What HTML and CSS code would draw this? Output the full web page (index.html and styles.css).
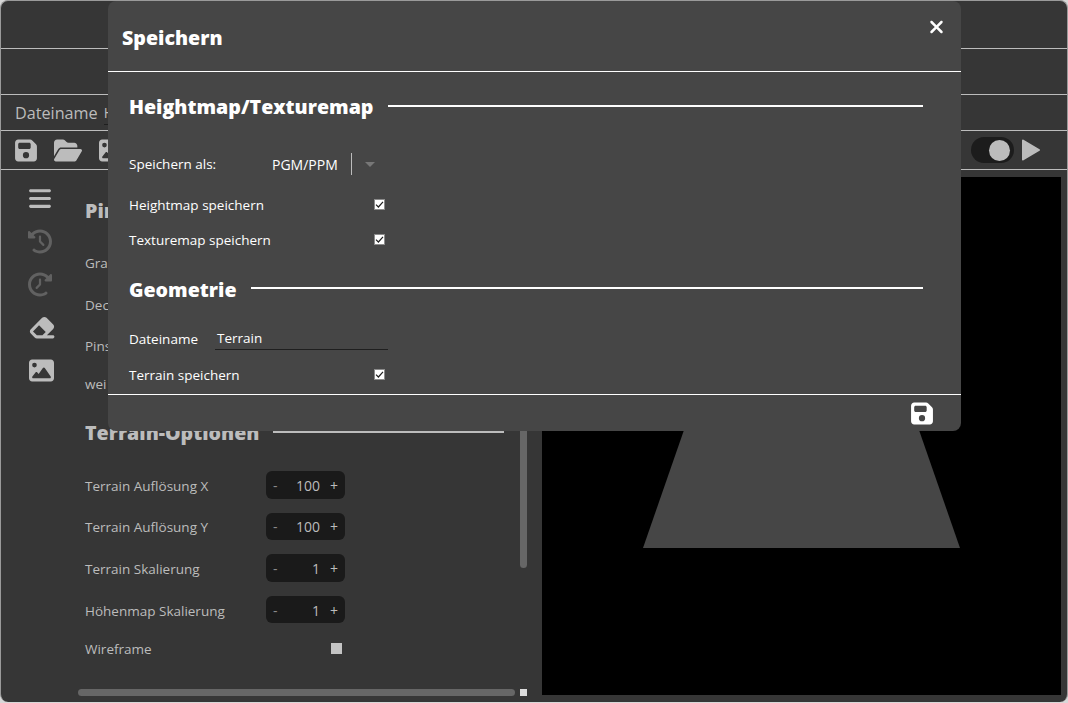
FILE: index.html
```html
<!DOCTYPE html>
<html lang="de">

<head>
    <meta charset="utf-8">
    <title>Terrain</title>
    <link rel="stylesheet" href="styles.css">
</head>

<body>
    <div class="app">
        <div class="bar bar-title"></div>
        <div class="bar bar-menu"></div>
        <div class="bar bar-file"><span>Dateiname</span><div class="file-input">H</div></div>
        <div class="bar bar-tools">
            <svg class="tool" width="22" height="25" viewBox="0 0 448 512"><path d="M64 32C28.7 32 0 60.7 0 96V416c0 35.3 28.7 64 64 64H384c35.3 0 64-28.7 64-64V173.3c0-17-6.7-33.3-18.7-45.3L352 50.7C340 38.7 323.7 32 306.7 32H64zm0 96c0-17.7 14.3-32 32-32H288c17.7 0 32 14.3 32 32v64c0 17.7-14.3 32-32 32H96c-17.7 0-32-14.3-32-32V128zM224 288a64 64 0 1 1 0 128 64 64 0 1 1 0-128z"/></svg>
            <svg class="tool" width="28" height="25" viewBox="0 0 576 512"><path d="M88.7 223.8L0 375.8V96C0 60.7 28.7 32 64 32H181.5c17 0 33.3 6.7 45.3 18.7l26.5 26.5c12 12 28.3 18.7 45.3 18.7H416c35.3 0 64 28.7 64 64v32H144c-22.8 0-43.8 12.1-55.3 31.8zm27.6 16.1C122.1 230 132.6 224 144 224H544c11.5 0 22 6.1 27.7 16.1s5.7 22.2-.1 32.1l-112 192C453.9 474 443.4 480 432 480H32c-11.5 0-22-6.1-27.7-16.1s-5.7-22.2 .1-32.1l112-192z"/></svg>
            <svg class="tool" width="25" height="25" viewBox="0 0 512 512"><path d="M0 96C0 60.7 28.7 32 64 32H448c35.3 0 64 28.7 64 64V416c0 35.3-28.7 64-64 64H64c-35.3 0-64-28.7-64-64V96zM323.8 202.5c-4.5-6.6-11.9-10.5-19.8-10.5s-15.4 3.9-19.8 10.5l-87 127.6L170.7 297c-4.6-5.7-11.5-9-18.7-9s-14.2 3.3-18.7 9l-64 80c-5.8 7.2-6.9 17.1-2.9 25.4s12.4 13.6 21.6 13.6h96 32H424c8.9 0 17.1-4.9 21.2-12.8s3.6-17.4-1.4-24.7l-120-176zM112 192a48 48 0 1 0 0-96 48 48 0 1 0 0 96z"/></svg>
            <div class="tools-right">
                <div class="toggle"><span class="knob"></span></div>
                <svg class="tool" width="20" height="24" viewBox="0 0 20 24"><path d="M2 2.500 18 12 2 21.500z" stroke="#bcbcbc" stroke-width="2" stroke-linejoin="round"/></svg>
            </div>
        </div>

        <div class="main">
            <div class="rail">
                <svg width="22" height="25" viewBox="0 0 448 512"><path d="M0 96C0 78.3 14.3 64 32 64H416c17.7 0 32 14.3 32 32s-14.3 32-32 32H32C14.3 128 0 113.7 0 96zM0 256c0-17.700 14.300-32 32-32H416c17.700 0 32 14.300 32 32s-14.300 32-32 32H32c-17.700 0-32-14.300-32-32zM448 416c0 17.700-14.300 32-32 32H32c-17.700 0-32-14.300-32-32s14.300-32 32-32H416c17.700 0 32 14.300 32 32z"/></svg>
                <svg class="off" width="24" height="25" viewBox="0 0 512 512"><path d="M75 75L41 41C25.900 25.900 0 36.600 0 57.900V168c0 13.300 10.700 24 24 24H134.100c21.400 0 32.100-25.900 17-41l-30.800-30.800C155 85.500 203 64 256 64c106 0 192 86 192 192s-86 192-192 192c-40.800 0-78.600-12.700-109.700-34.400c-14.500-10.100-34.400-6.600-44.600 7.900s-6.600 34.400 7.900 44.600C151.200 495 201.700 512 256 512c141.400 0 256-114.600 256-256S397.400 0 256 0C185.300 0 121.300 28.700 75 75zm181 53c-13.300 0-24 10.700-24 24V256c0 6.400 2.500 12.500 7 17l72 72c9.400 9.400 24.600 9.400 33.900 0s9.400-24.600 0-33.900l-65-65V152c0-13.300-10.700-24-24-24z"/></svg>
                <svg class="off mirror" width="24" height="25" viewBox="0 0 512 512"><path d="M75 75L41 41C25.900 25.900 0 36.600 0 57.900V168c0 13.300 10.700 24 24 24H134.100c21.400 0 32.100-25.900 17-41l-30.800-30.800C155 85.500 203 64 256 64c106 0 192 86 192 192s-86 192-192 192c-40.800 0-78.600-12.700-109.700-34.400c-14.500-10.100-34.400-6.600-44.600 7.900s-6.600 34.400 7.900 44.600C151.200 495 201.700 512 256 512c141.400 0 256-114.600 256-256S397.400 0 256 0C185.300 0 121.300 28.700 75 75zm181 53c-13.300 0-24 10.700-24 24V256c0 6.400 2.500 12.500 7 17l72 72c9.400 9.400 24.600 9.400 33.900 0s9.400-24.600 0-33.900l-65-65V152c0-13.300-10.700-24-24-24z"/></svg>
                <svg class="erase" width="28" height="25" viewBox="0 0 576 512"><path d="M290.700 57.400L57.400 290.700c-25 25-25 65.500 0 90.500l80 80c12 12 28.300 18.700 45.300 18.700H288h9.400H512c17.700 0 32-14.300 32-32s-14.300-32-32-32H387.900L518.600 285.300c25-25 25-65.500 0-90.500L381.300 57.400c-25-25-65.500-25-90.500 0zM297.400 416H288l-105.400 0-80-80L227.300 211.300 364.700 348.700 297.400 416z"/></svg>
                <svg class="picture" width="25" height="25" viewBox="0 0 512 512"><path d="M0 96C0 60.700 28.700 32 64 32H448c35.300 0 64 28.700 64 64V416c0 35.300-28.700 64-64 64H64c-35.300 0-64-28.700-64-64V96zM323.800 202.500c-4.500-6.600-11.900-10.500-19.800-10.500s-15.400 3.900-19.800 10.500l-87 127.600L170.700 297c-4.600-5.700-11.500-9-18.700-9s-14.200 3.300-18.700 9l-64 80c-5.800 7.200-6.900 17.100-2.900 25.400s12.400 13.600 21.600 13.600h96 32H424c8.900 0 17.100-4.900 21.200-12.800s3.600-17.400-1.400-24.700l-120-176zM112 192a48 48 0 1 0 0-96 48 48 0 1 0 0 96z"/></svg>
            </div>

            <div class="panel">
                <h3 class="panel-head first">Pin</h3>
                <div class="prow r-grafik">Gra</div>
                <div class="prow r-deck">Dec</div>
                <div class="prow r-pinsel">Pins</div>
                <div class="prow r-weich">wei</div>
                <h3 class="panel-head second">Terrain-Optionen<span class="rule"></span></h3>
                <div class="prow num"><span class="lbl">Terrain Auflösung X</span><div class="stepper"><span>-</span><b>100</b><span>+</span></div></div>
                <div class="prow num"><span class="lbl">Terrain Auflösung Y</span><div class="stepper"><span>-</span><b>100</b><span>+</span></div></div>
                <div class="prow num"><span class="lbl">Terrain Skalierung</span><div class="stepper"><span>-</span><b>1</b><span>+</span></div></div>
                <div class="prow num"><span class="lbl">Höhenmap Skalierung</span><div class="stepper"><span>-</span><b>1</b><span>+</span></div></div>
                <div class="prow num wire"><span class="lbl">Wireframe</span><i class="box"></i></div>
                <div class="vscroll"></div>
                <div class="hscroll"></div>
                <div class="corner"></div>
            </div>

            <div class="view">
                <svg width="519" height="518" viewBox="0 0 519 518"><polygon points="150,230 369,230 418,371 101,371" fill="#464646"/></svg>
            </div>
        </div>

        <div class="modal">
            <div class="modal-head">
                <h2>Speichern</h2>
                <svg class="close" width="15" height="20" viewBox="0 0 384 512"><path d="M342.600 150.600c12.500-12.500 12.500-32.800 0-45.300s-32.800-12.500-45.300 0L192 210.700 86.600 105.400c-12.500-12.500-32.800-12.500-45.300 0s-12.500 32.800 0 45.300L146.700 256 41.400 361.400c-12.500 12.500-12.500 32.800 0 45.300s32.800 12.500 45.300 0L192 301.300 297.400 406.600c12.500 12.500 32.800 12.500 45.300 0s12.500-32.800 0-45.300L237.300 256 342.600 150.600z"/></svg>
            </div>
            <div class="modal-body">
                <h3 class="sect">Heightmap/Texturemap<span class="rule"></span></h3>
                <div class="field select-row">
                    <span class="label">Speichern als:</span>
                    <div class="select"><span>PGM/PPM</span><i class="sep"></i><i class="caret"></i></div>
                </div>
                <div class="field check h1"><span>Heightmap speichern</span><i class="cb"><svg width="9" height="9" viewBox="0 0 9 9"><path d="M1 4.600 3.400 7 8 1.800"/></svg></i></div>
                <div class="field check h2"><span>Texturemap speichern</span><i class="cb"><svg width="9" height="9" viewBox="0 0 9 9"><path d="M1 4.600 3.400 7 8 1.800"/></svg></i></div>
                <h3 class="sect geo">Geometrie<span class="rule"></span></h3>
                <div class="field name-row"><span>Dateiname</span><div class="input">Terrain</div></div>
                <div class="field check h3"><span>Terrain speichern</span><i class="cb"><svg width="9" height="9" viewBox="0 0 9 9"><path d="M1 4.600 3.400 7 8 1.800"/></svg></i></div>
            </div>
            <div class="modal-foot">
                <svg width="22" height="25" viewBox="0 0 448 512"><path d="M64 32C28.700 32 0 60.700 0 96V416c0 35.300 28.700 64 64 64H384c35.300 0 64-28.700 64-64V173.300c0-17-6.700-33.300-18.700-45.300L352 50.700C340 38.700 323.700 32 306.700 32H64zm0 96c0-17.700 14.300-32 32-32H288c17.700 0 32 14.300 32 32v64c0 17.700-14.300 32-32 32H96c-17.700 0-32-14.300-32-32V128zM224 288a64 64 0 1 1 0 128 64 64 0 1 1 0-128z"/></svg>
            </div>
        </div>
    </div>
</body>

</html>
```

FILE: styles.css
```css
* {
    box-sizing: border-box;
    font-family: "Open Sans", "Noto Sans", sans-serif;
}

html,
body {
    margin: 0;
    height: 100%;
    background-color: #d8d8d8;
    overflow: hidden;
}

h2,
h3 {
    margin: 0;
    font-weight: 800;
}

svg {
    display: block;
    fill: currentColor;
}

.app {
    position: relative;
    width: 1068px;
    height: 702px;
    background-color: #363636;
    color: #bcbcbc;
    border: 1px solid #9a9a9a;
    border-bottom: 0;
    border-radius: 8px;
    display: flex;
    flex-direction: column;
    overflow: hidden;
}

.bar {
    border-bottom: 1px solid #bcbcbc;
    flex: none;
}

.bar-title {
    height: 48px;
}

.bar-menu {
    height: 46px;
}

.bar-file {
    height: 36px;
    padding-left: 14px;
    font-size: 16.200px;
    line-height: 36px;
    display: flex;
    gap: 6px;
}

.file-input {
    width: 170px;
    height: 30px;
    line-height: 36px;
    font-size: 14px;
    border-bottom: 1px solid #1f1f1f;
}

.bar-tools {
    height: 39px;
    display: flex;
    align-items: center;
    gap: 17px;
    padding: 0 26px 0 14px;
}

.tools-right {
    margin-left: auto;
    display: flex;
    align-items: center;
    gap: 7px;
}

.toggle {
    width: 43px;
    height: 26px;
    border-radius: 13px;
    background-color: #1c1c1c;
    display: flex;
    align-items: center;
    justify-content: flex-end;
    padding-right: 4px;
}

.knob {
    width: 21px;
    height: 21px;
    border-radius: 50%;
    background-color: #bcbcbc;
}

.main {
    flex: 1;
    display: flex;
    min-height: 0;
}

.rail {
    flex: none;
    width: 76px;
    padding-top: 16px;
    display: flex;
    flex-direction: column;
    align-items: center;
    gap: 18px;
    margin-left: 1px;
}

.rail .off {
    color: #616161;
}

.rail .mirror {
    transform: scaleX(-1);
}

.rail .erase {
    margin-left: 4px;
}

.rail .picture {
    margin-left: 2px;
}

.panel {
    position: relative;
    flex: none;
    width: 463px;
    padding: 27px 0 0 7px;
    font-size: 13.500px;
}

.panel-head {
    display: flex;
    align-items: center;
    gap: 14px;
    width: 419px;
    height: 28px;
    font-size: 19.600px;
    line-height: 28px;
}

.panel-head.second {
    margin-top: 25px;
}

.rule {
    flex: 1;
    height: 2px;
    margin-bottom: 2px;
    background-color: currentColor;
}

.prow {
    display: flex;
    align-items: center;
    justify-content: space-between;
    width: 260px;
    height: 20px;
}

.r-grafik {
    margin-top: 28px;
}

.r-deck {
    margin-top: 22px;
}

.r-pinsel {
    margin-top: 21px;
}

.r-weich {
    margin-top: 18px;
}

.num {
    height: 27.600px;
    margin-top: 14px;
}

.second + .num {
    margin-top: 24px;
}

.lbl {
    padding-top: 2px;
}

.stepper {
    width: 79px;
    height: 100%;
    border-radius: 6px;
    background-color: #1a1a1a;
    display: flex;
    align-items: center;
    padding: 1px 7px 0;
    font-size: 14px;
}

.stepper span:first-child {
    color: #8a8a8a;
    width: 10px;
}

.stepper b {
    flex: 1;
    text-align: right;
    font-weight: 400;
    padding-right: 10px;
}

.wire {
    margin-top: 11px;
    padding-right: 3px;
}

.box {
    width: 11px;
    height: 11px;
    background-color: #c4c4c4;
}

.vscroll,
.hscroll,
.corner {
    position: absolute;
}

.vscroll {
    left: 442px;
    top: 240px;
    width: 7px;
    height: 158px;
    border-radius: 0 0 4px 4px;
    background-color: #666;
}

.hscroll {
    left: 0;
    bottom: 6px;
    width: 437px;
    height: 7px;
    border-radius: 4px;
    background-color: #666;
}

.corner {
    left: 442px;
    bottom: 6px;
    width: 7px;
    height: 7px;
    background-color: #dcdcdc;
}

.view {
    flex: none;
    width: 519px;
    height: 518px;
    margin: 7px 0 0 1px;
    background-color: #000;
}

.modal {
    position: absolute;
    left: 107px;
    top: 0;
    width: 853px;
    height: 430px;
    border-radius: 8px;
    background-color: #464646;
    color: #fff;
    display: flex;
    flex-direction: column;
}

.modal-head {
    flex: none;
    height: 71px;
    border-bottom: 1px solid #fff;
    display: flex;
    justify-content: space-between;
    padding: 18px 17px 0 14px;
}

.modal-head h2 {
    font-size: 19.600px;
    line-height: 38px;
}

.close {
    margin-top: -2px;
}

.modal-body {
    flex: 1;
    padding: 21px 38px 0 21px;
    font-size: 13.500px;
}

.sect {
    display: flex;
    align-items: center;
    gap: 15px;
    height: 28px;
    font-size: 19.600px;
    line-height: 28px;
}

.sect.geo {
    margin: 25px 0 -1px;
    gap: 14px;
}

.sect.geo .rule {
    margin-bottom: 4px;
}

.field {
    display: flex;
    align-items: center;
    width: 257px;
    height: 22px;
}

.select-row {
    margin-top: 32px;
}

.label {
    width: 143px;
}

.select {
    display: flex;
    align-items: center;
    font-size: 14px;
}

.sep {
    width: 1px;
    height: 22px;
    margin-left: 13px;
    background-color: #bcbcbc;
}

.caret {
    margin-left: 13px;
    border: 5px solid transparent;
    border-top: 5px solid #777;
    border-bottom: 0;
}

.check {
    justify-content: space-between;
}

.h1 {
    margin-top: 19px;
}

.h2 {
    margin-top: 13px;
}

.cb {
    width: 11px;
    height: 11px;
    margin: 0 1px 2px 0;
    background-color: #fff;
    border: 1px solid #8c8c8c;
    color: #222;
}

.cb svg {
    fill: none;
    stroke: #222;
    stroke-width: 1.200;
}

.name-row {
    margin-top: 25px;
    width: 259px;
    justify-content: space-between;
}

.input {
    width: 173px;
    height: 22px;
    line-height: 20px;
    padding-left: 2px;
    border-bottom: 1px solid #1f1f1f;
}

.h3 {
    margin-top: 14px;
}

.modal-foot {
    flex: none;
    height: 37px;
    border-top: 1px solid #fff;
    display: flex;
    justify-content: flex-end;
    align-items: center;
    padding-right: 28px;
}
```
